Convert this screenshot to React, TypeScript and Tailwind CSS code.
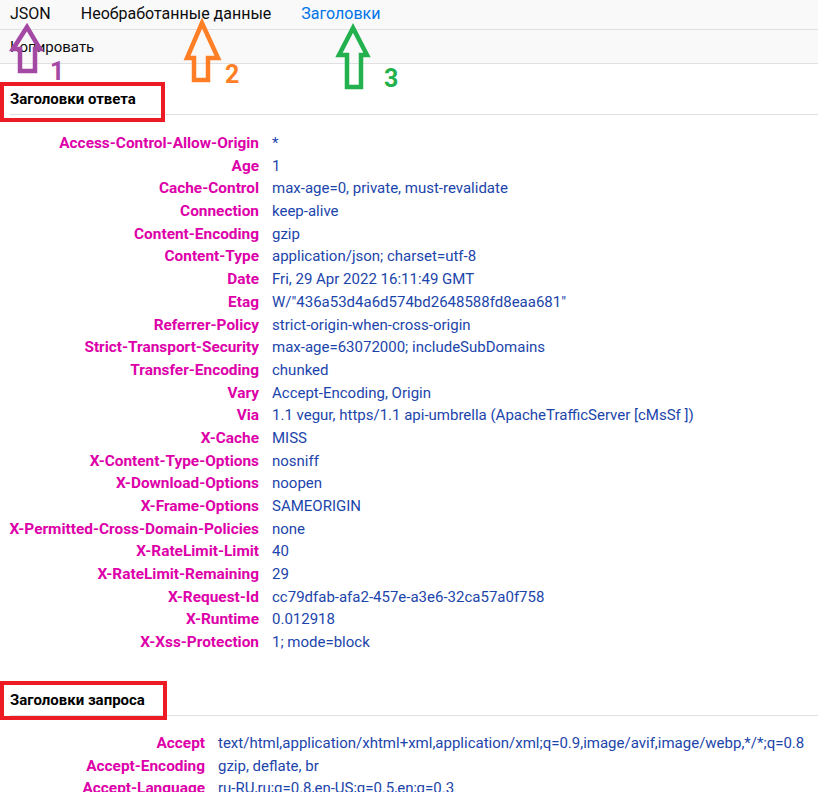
import React from 'react';

type Header = [string, string];

const responseHeaders: Header[] = [
  ['Access-Control-Allow-Origin', '*'],
  ['Age', '1'],
  ['Cache-Control', 'max-age=0, private, must-revalidate'],
  ['Connection', 'keep-alive'],
  ['Content-Encoding', 'gzip'],
  ['Content-Type', 'application/json; charset=utf-8'],
  ['Date', 'Fri, 29 Apr 2022 16:11:49 GMT'],
  ['Etag', 'W/"436a53d4a6d574bd2648588fd8eaa681"'],
  ['Referrer-Policy', 'strict-origin-when-cross-origin'],
  ['Strict-Transport-Security', 'max-age=63072000; includeSubDomains'],
  ['Transfer-Encoding', 'chunked'],
  ['Vary', 'Accept-Encoding, Origin'],
  ['Via', '1.1 vegur, https/1.1 api-umbrella (ApacheTrafficServer [cMsSf ])'],
  ['X-Cache', 'MISS'],
  ['X-Content-Type-Options', 'nosniff'],
  ['X-Download-Options', 'noopen'],
  ['X-Frame-Options', 'SAMEORIGIN'],
  ['X-Permitted-Cross-Domain-Policies', 'none'],
  ['X-RateLimit-Limit', '40'],
  ['X-RateLimit-Remaining', '29'],
  ['X-Request-Id', 'cc79dfab-afa2-457e-a3e6-32ca57a0f758'],
  ['X-Runtime', '0.012918'],
  ['X-Xss-Protection', '1; mode=block'],
];

const requestHeaders: Header[] = [
  ['Accept', 'text/html,application/xhtml+xml,application/xml;q=0.9,image/avif,image/webp,*/*;q=0.8'],
  ['Accept-Encoding', 'gzip, deflate, br'],
  ['Accept-Language', 'ru-RU,ru;q=0.8,en-US;q=0.5,en;q=0.3'],
];

const HeaderTable: React.FC<{ rows: Header[]; className: string }> = ({ rows, className }) => (
  <div className={`grid ${className}`}>
    {rows.map(([name, value]) => (
      <React.Fragment key={name}>
        <div className="text-right font-bold text-[15.4px] leading-[22.68px] text-[#dd00a9] whitespace-nowrap">
          {name}
        </div>
        <div className="pl-[13px] text-[15px] leading-[22.68px] text-[#1b45ab] whitespace-nowrap">{value}</div>
      </React.Fragment>
    ))}
  </div>
);

// red annotation frame drawn over the section title
const SectionTitle: React.FC<{ title: string; frame: string }> = ({ title, frame }) => (
  <div className="relative ml-[10px] border-b border-[#e0e0e2] pb-[5px]">
    <div className="font-bold text-[15px] leading-[20px] text-black">{title}</div>
    <div className={`absolute left-[-10px] border-4 border-[#ed1c24] ${frame}`} />
  </div>
);

const Arrows = () => (
  <div className="pointer-events-none absolute inset-0">
    <svg width="818" height="100" className="absolute left-0 top-0" fill="none" strokeWidth="4.5" strokeLinejoin="miter">
      <polygon points="27,27 13,49 20,49 20,71 35,71 35,49 40,49" stroke="#a349a4" />
      <polygon points="202,23 187,58 194,58 194,80 208,80 208,58 218,58" stroke="#ff7f27" />
      <polygon points="353,28 339,55 347,55 347,87 361,87 361,55 367,55" stroke="#22b14c" />
    </svg>
    <span className="absolute left-[50px] top-[59px] text-[25px] font-bold leading-none text-[#a349a4]">1</span>
    <span className="absolute left-[225px] top-[62px] text-[25px] font-bold leading-none text-[#ff7f27]">2</span>
    <span className="absolute left-[384px] top-[66px] text-[25px] font-bold leading-none text-[#22b14c]">3</span>
  </div>
);

export default function App() {
  return (
    <div className="relative h-screen overflow-hidden bg-white font-['Roboto',sans-serif] text-[#0c0c0d]">
      <div className="flex h-[30px] gap-[30px] border-b border-[#e0e0e2] bg-[#f9f9fa] pl-[10px] text-[16px] leading-[28px]">
        <span>JSON</span>
        <span>Необработанные данные</span>
        <span className="text-[#0074e8]">Заголовки</span>
      </div>
      <div className="h-[34px] border-b border-[#e0e0e2] bg-[#f9f9fa] pl-[10px] text-[15px] leading-[34px]">
        Копировать
      </div>

      <div className="mt-[25px]">
        <SectionTitle title="Заголовки ответа" frame="top-[-7px] h-[40px] w-[165px]" />
        <HeaderTable rows={responseHeaders} className="mt-[17px] grid-cols-[259px_1fr]" />
      </div>

      <div className="mt-[36px]">
        <SectionTitle title="Заголовки запроса" frame="top-[-9px] h-[39px] w-[167px]" />
        <HeaderTable rows={requestHeaders} className="mt-[16px] grid-cols-[205px_1fr]" />
      </div>

      <Arrows />
    </div>
  );
}
